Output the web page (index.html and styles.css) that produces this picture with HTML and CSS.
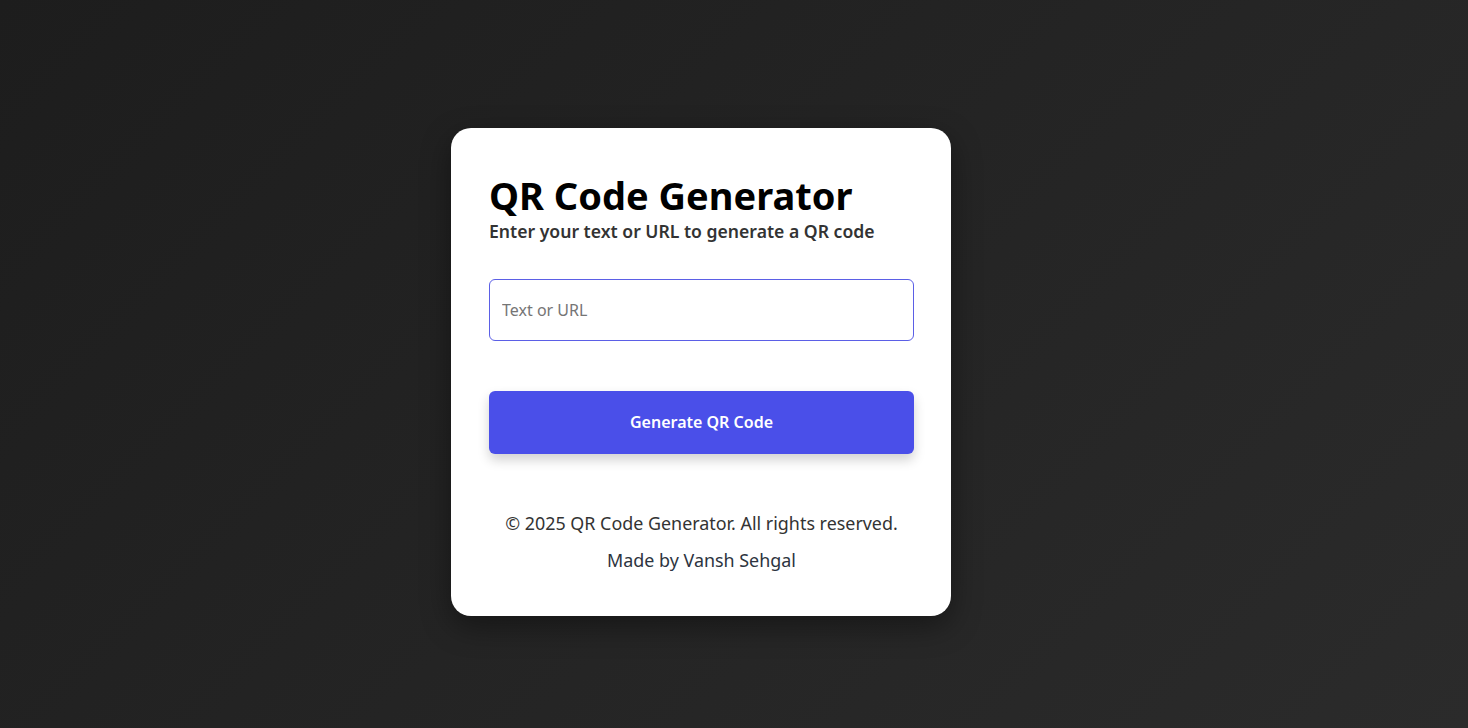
FILE: index.html
```html
<!DOCTYPE html>
<html lang="en">
<head>
<meta charset="utf-8">
<title>QR Code Generator</title>
<link rel="stylesheet" href="styles.css">
</head>
<body>
<main class="card">
  <h1 class="title">QR Code Generator</h1>
  <p class="subtitle">Enter your text or URL to generate a QR code</p>
  <input class="field" type="text" placeholder="Text or URL">
  <button class="btn" type="button">Generate QR Code</button>
  <footer class="foot">
    <p>© 2025 QR Code Generator. All rights reserved.</p>
    <p class="credit">Made by Vansh Sehgal</p>
  </footer>
</main>
</body>
</html>
```

FILE: styles.css
```css
* { box-sizing: border-box; }
html, body { height: 100%; }
body {
  margin: 0;
  font-family: "Noto Sans", "Open Sans", sans-serif;
  background: linear-gradient(135deg, #1d1d1d 0%, #2b2b2b 100%);
  display: flex;
  align-items: center;
  justify-content: center;
}
.card {
  width: 500px;
  margin: 15px 66px 0 0;
  background: #fff;
  border-radius: 20px;
  padding: 43px 37px 37px 38px;
  box-shadow: 0 10px 30px rgba(0,0,0,0.4);
  display: flex;
  flex-direction: column;
}
.title {
  margin: 0;
  font-size: 38px;
  font-weight: 700;
  line-height: 48px;
  color: #000;
}
.subtitle {
  margin: 0;
  font-size: 17.6px;
  font-weight: 600;
  color: #333;
  line-height: 25px;
}
.field {
  margin-top: 35px;
  height: 62px;
  border: 1px solid #5b5fe6;
  border-radius: 6px;
  padding: 0 12px;
  font-family: inherit;
  font-size: 16px;
  outline: none;
}
.field::placeholder { color: #757575; }
.btn {
  margin-top: 50px;
  height: 63px;
  border: none;
  border-radius: 6px;
  background: #4a4fe9;
  color: #fff;
  font-family: inherit;
  font-size: 16px;
  font-weight: 600;
  box-shadow: 0 6px 12px rgba(0,0,0,0.18);
}
.foot {
  margin-top: 51px;
  text-align: center;
  color: #333;
  font-size: 17.9px;
}
.foot p { margin: 0; line-height: 37px; }
.credit { color: #2d3440; }
```
